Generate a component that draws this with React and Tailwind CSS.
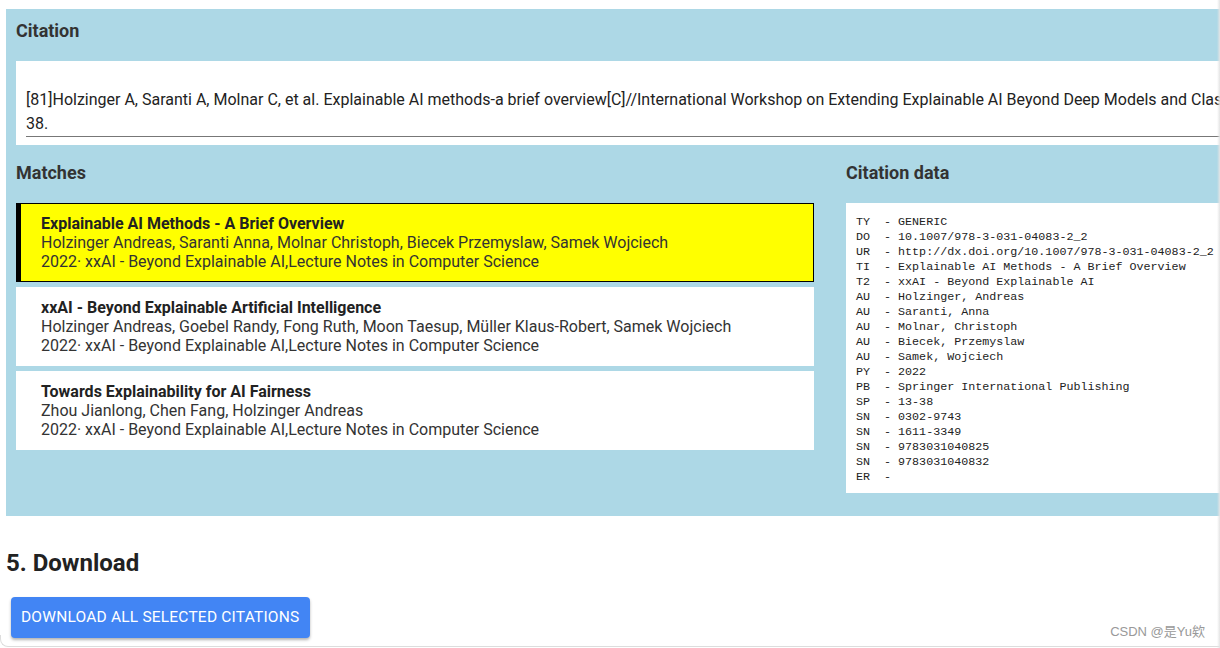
const matches = [
  {
    title: 'Explainable AI Methods - A Brief Overview',
    authors: 'Holzinger Andreas, Saranti Anna, Molnar Christoph, Biecek Przemyslaw, Samek Wojciech',
    source: '2022· xxAI - Beyond Explainable AI,Lecture Notes in Computer Science',
    selected: true,
  },
  {
    title: 'xxAI - Beyond Explainable Artificial Intelligence',
    authors: 'Holzinger Andreas, Goebel Randy, Fong Ruth, Moon Taesup, Müller Klaus-Robert, Samek Wojciech',
    source: '2022· xxAI - Beyond Explainable AI,Lecture Notes in Computer Science',
  },
  {
    title: 'Towards Explainability for AI Fairness',
    authors: 'Zhou Jianlong, Chen Fang, Holzinger Andreas',
    source: '2022· xxAI - Beyond Explainable AI,Lecture Notes in Computer Science',
  },
];

const ris = [
  'TY  - GENERIC',
  'DO  - 10.1007/978-3-031-04083-2_2',
  'UR  - http://dx.doi.org/10.1007/978-3-031-04083-2_2',
  'TI  - Explainable AI Methods - A Brief Overview',
  'T2  - xxAI - Beyond Explainable AI',
  'AU  - Holzinger, Andreas',
  'AU  - Saranti, Anna',
  'AU  - Molnar, Christoph',
  'AU  - Biecek, Przemyslaw',
  'AU  - Samek, Wojciech',
  'PY  - 2022',
  'PB  - Springer International Publishing',
  'SP  - 13-38',
  'SN  - 0302-9743',
  'SN  - 1611-3349',
  'SN  - 9783031040825',
  'SN  - 9783031040832',
  'ER  - ',
];

export default function App() {
  return (
    <div
      className="relative w-[1220px] h-[648px] overflow-hidden bg-white text-[#333]"
      style={{ fontFamily: 'Roboto, "Liberation Sans", sans-serif' }}
    >
      <div className="ml-[6px] mt-[9px] w-[1260px] bg-[#ADD8E6] px-[10px] pt-[11px] pb-[23px]">
        <h2 className="text-[18px] leading-[22px] font-bold text-[#333]">Citation</h2>

        <div className="mt-[19px] bg-white px-[10px] pt-[27px] pb-[8px]">
          <div className="border-b border-[#777] text-[16px] leading-6 text-[#222]">
            <div className="whitespace-nowrap">
              [81]Holzinger A, Saranti A, Molnar C, et al. Explainable AI methods-a brief overview[C]//International Workshop on Extending Explainable AI Beyond Deep Models and Classifiers. Springer, Cham, 2022: 13-
            </div>
            <div>38.</div>
          </div>
        </div>

        <div className="mt-[17px] flex gap-[32px]">
          <div className="w-[798px]">
            <h2 className="text-[18px] leading-[22px] font-bold text-[#333]">Matches</h2>
            <div className="mt-[19px] flex flex-col gap-[5px]">
              {matches.map((m) =>
                m.selected ? (
                  <div
                    key={m.title}
                    className="bg-[#ffff00] border border-black border-l-[5px] pl-[20px] py-[10px] text-[16px] leading-[19px] text-[#333]"
                  >
                    <div className="font-bold text-[#222]">{m.title}</div>
                    <div>{m.authors}</div>
                    <div>{m.source}</div>
                  </div>
                ) : (
                  <div
                    key={m.title}
                    className="bg-white pl-[25px] py-[11px] text-[16px] leading-[19px] text-[#333]"
                  >
                    <div className="font-bold text-[#222]">{m.title}</div>
                    <div>{m.authors}</div>
                    <div>{m.source}</div>
                  </div>
                )
              )}
            </div>
          </div>

          <div className="flex-1">
            <h2 className="text-[18px] leading-[22px] font-bold text-[#333]">Citation data</h2>
            <div
              className="mt-[19px] bg-white px-[10px] pt-[12px] pb-[8px] text-[11.7px] leading-[15px] text-[#222] whitespace-pre"
              style={{ fontFamily: '"Liberation Mono", "DejaVu Sans Mono", monospace' }}
            >
              {ris.map((l, i) => (
                <div key={i}>{l}</div>
              ))}
            </div>
          </div>
        </div>
      </div>

      <h1 className="ml-[6px] mt-[33px] text-[24px] leading-[28px] font-bold text-[#222]">5. Download</h1>

      <button className="ml-[11px] mt-[20px] h-[41px] w-[299px] rounded-[4px] bg-[#4285F4] pl-[10px] text-left text-[15.5px] tracking-[0.2px] whitespace-nowrap text-white uppercase shadow-[0_2px_3px_rgba(0,0,0,0.3)]">
        Download all selected citations
      </button>

      <div className="absolute left-0 bottom-[1px] w-full h-[12px] border-b border-l border-[#ddd] rounded-bl-[8px]" />
      <div className="absolute right-0 top-0 h-full w-[3px] bg-gradient-to-l from-[#e4e4e4] to-transparent" />

      <div
        className="absolute right-[15px] top-[622px] text-[13px] leading-[20px] text-[#999]"
        style={{ fontFamily: '"Liberation Sans", "Noto Sans CJK SC", sans-serif' }}
      >
        CSDN @是Yu欸
      </div>
    </div>
  );
}
